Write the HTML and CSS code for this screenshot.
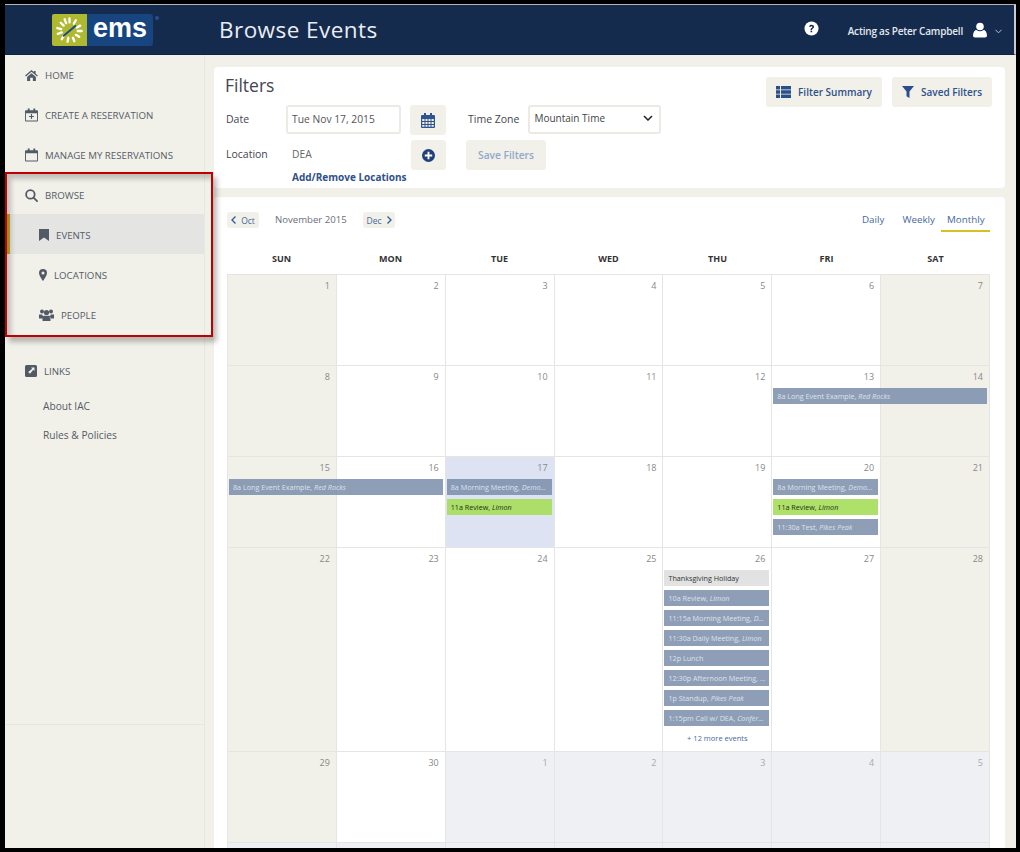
FILE: index.html
```html
<!DOCTYPE html>
<html lang="en">
<head>
  <meta charset="UTF-8">
  <title>Browse Events</title>
  <link rel="stylesheet" href="styles.css">
</head>
<body>
  <div class="window">
    <header class="topbar">
      <div class="logo">
        <div class="logo-mark">
          <svg viewBox="0 0 36 32" width="35" height="32" fill="none" stroke="#fff" stroke-width="2.4" stroke-linecap="round">
            <path d="M18 4v4M24.5 6l-2 3.5M29 11.500l-3.500 2M30.500 17h-4M28 23l-3.500-2M23 27.500l-1.500-3.500M16 28l.8-4M10 25.500l2-3.500M6 20l4-1.500M5.500 14l4 1M9 8.500l3 3M13 5l1.500 4"/>
            <path d="M12 22L24 12" stroke="#1b4a8a" stroke-width="2"/>
          </svg>
        </div>
        <div class="logo-name">ems</div>
        <span class="logo-dot"></span>
      </div>
      <h1 class="page-title">Browse Events</h1>
      <div class="topbar-right">
        <svg class="help-icon" viewBox="0 0 16 16" width="15" height="15">
          <circle cx="8" cy="8" r="7.500" fill="#fff"/>
          <path d="M5.400 6.200C5.600 4.700 6.700 4 8.100 4c1.500 0 2.600.9 2.600 2.200 0 1.100-.6 1.600-1.400 2.100-.6.4-.7.600-.7 1.200H7c0-1.100.3-1.600 1.100-2.100.6-.4.9-.7.9-1.100 0-.5-.4-.8-1-.8s-1 .3-1.100 1z" fill="#152b4d"/>
          <rect x="7" y="10.300" width="1.700" height="1.700" fill="#152b4d"/>
        </svg>
        <span class="acting">Acting as Peter Campbell</span>
        <svg viewBox="0 0 14 16" width="14" height="16" fill="#fff">
          <circle cx="7" cy="4.500" r="3.800"/>
          <path d="M0 13.500C0 10 1.800 8 3.500 8c1 .8 2.200 1.200 3.500 1.200S9.500 8.800 10.500 8C12.200 8 14 10 14 13.500c0 1.200-.8 2-2 2H2c-1.200 0-2-.8-2-2z"/>
        </svg>
        <svg class="caret" viewBox="0 0 8 5" width="7" height="5" fill="none" stroke="#c9d0da" stroke-width="1">
          <path d="M.5 .5L4 4l3.500-3.500"/>
        </svg>
      </div>
    </header>

    <div class="content">
      <aside class="sidebar">
        <nav class="nav">
          <a class="nav-item">
            <svg viewBox="0 0 14 12" width="13" height="11"><path d="M7 0L0 6l1 1 6-5 6 5 1-1-2.500-2V1h-2v1.300zM2.200 7.500V12h3.300V8.500h3V12h3.300V7.500L7 3.500z"/></svg>
            HOME
          </a>
          <a class="nav-item">
            <svg viewBox="0 0 14 14" width="13" height="14"><path fill-rule="evenodd" d="M1 2h2V0h2v2h4V0h2v2h2a1 1 0 0 1 1 1v10a1 1 0 0 1-1 1H1a1 1 0 0 1-1-1V3a1 1 0 0 1 1-1zm0 3v8h12V5zM6.400 6h1.200v2h2v1.200h-2v2H6.400v-2h-2V8h2z"/></svg>
            CREATE A RESERVATION
          </a>
          <a class="nav-item">
            <svg viewBox="0 0 14 14" width="13" height="14"><path fill-rule="evenodd" d="M1 2h2V0h2v2h4V0h2v2h2a1 1 0 0 1 1 1v10a1 1 0 0 1-1 1H1a1 1 0 0 1-1-1V3a1 1 0 0 1 1-1zm0 3v8h12V5z"/></svg>
            MANAGE MY RESERVATIONS
          </a>
          <a class="nav-item">
            <svg class="search-icon" viewBox="0 0 14 14" width="13" height="13"><circle cx="5.800" cy="5.800" r="4.600"/><path d="M9.200 9.200L13 13"/></svg>
            BROWSE
          </a>
          <a class="nav-item sub active">
            <svg viewBox="0 0 10 12" width="10" height="12"><path d="M0 0h10v12L5 8.500 0 12z"/></svg>
            EVENTS
          </a>
          <a class="nav-item sub">
            <svg viewBox="0 0 8 12" width="8" height="12"><path fill-rule="evenodd" d="M4 0a4 4 0 0 1 4 4c0 2-2.500 6-4 8-1.500-2-4-6-4-8a4 4 0 0 1 4-4zm0 2.500a1.500 1.500 0 1 0 0 3 1.500 1.500 0 0 0 0-3z"/></svg>
            LOCATIONS
          </a>
          <a class="nav-item sub">
            <svg viewBox="0 0 15 12" width="15" height="12"><circle cx="3" cy="2.500" r="2"/><circle cx="12" cy="2.500" r="2"/><circle cx="7.500" cy="3.500" r="2.600"/><path d="M0 5.500h3.200l1 2.500v1.500H0zM15 5.500h-3.200l-1 2.500v1.500H15zM4.500 6.800h6l1 2v2.700a.5.5 0 0 1-.5.500H4a.5.500 0 0 1-.5-.5V8.800z"/></svg>
            PEOPLE
          </a>
        </nav>
        <div class="links">
          <div class="nav-item links-title">
            <svg viewBox="0 0 12 12" width="12" height="12"><path fill-rule="evenodd" d="M1.500 0h9A1.500 1.500 0 0 1 12 1.500v9a1.500 1.500 0 0 1-1.500 1.500h-9A1.500 1.500 0 0 1 0 10.500v-9A1.500 1.500 0 0 1 1.500 0zM6 2.500l1.200 1.200-4 3.300 1.800 1.800 3.300-4L9.500 6V2.500z"/></svg>
            LINKS
          </div>
          <a class="link">About IAC</a>
          <a class="link">Rules &amp; Policies</a>
        </div>
        <div class="sidebar-footer"></div>
      </aside>

      <main class="main">
        <section class="card filters">
          <div class="filters-left">
            <h2 class="filters-title">Filters</h2>
            <div class="filter-row">
              <span class="filter-label">Date</span>
              <div class="input">Tue Nov 17, 2015</div>
              <button class="icon-btn">
                <svg viewBox="0 0 14 15" width="14" height="15" fill="#2e5590"><path fill-rule="evenodd" d="M1 2h2V0h2v2h4V0h2v2h2a1 1 0 0 1 1 1v11a1 1 0 0 1-1 1H1a1 1 0 0 1-1-1V3a1 1 0 0 1 1-1zm.200 4v2h2.300V6zm3.300 0v2h2V6zm3 0v2h2V6zm3 0v2h2.300V6zm-9.300 3v2h2.300V9zm3.300 0v2h2V9zm3 0v2h2V9zm3 0v2h2.300V9zm-9.300 3v1.800h2.300V12zm3.300 0v1.800h2V12zm3 0v1.800h2V12zm3 0v1.800h2.300V12z"/></svg>
              </button>
              <span class="filter-label tz">Time Zone</span>
              <div class="select">
                Mountain Time
                <svg viewBox="0 0 10 6" width="10" height="6" fill="none" stroke="#222" stroke-width="1.500"><path d="M1 1l4 4 4-4"/></svg>
              </div>
            </div>
            <div class="filter-row">
              <span class="filter-label">Location</span>
              <span class="location-value">DEA</span>
              <button class="icon-btn add-btn">
                <svg viewBox="0 0 14 14" width="13" height="13"><circle cx="7" cy="7" r="7" fill="#1f427c"/><path d="M6 3h2v3h3v2H8v3H6V8H3V6h3z" fill="#fff"/></svg>
              </button>
              <button class="save-btn">Save Filters</button>
            </div>
            <a class="add-link">Add/Remove Locations</a>
          </div>
          <div class="filters-actions">
            <button class="action-btn">
              <svg viewBox="0 0 15 12" width="15" height="12" fill="#2a4f8a"><path d="M0 0h4v3.400H0zM5 0h10v3.400H5zM0 4.300h4v3.400H0zM5 4.300h10v3.400H5zM0 8.600h4V12H0zM5 8.600h10V12H5z"/></svg>
              Filter Summary
            </button>
            <button class="action-btn saved">
              <svg viewBox="0 0 12 12" width="12" height="12" fill="#2a4f8a"><path d="M0 0h12L7.500 5.500V12l-3-1.800V5.500z"/></svg>
              Saved Filters
            </button>
          </div>
        </section>

        <section class="card calendar">
          <div class="cal-toolbar">
            <div class="cal-nav">
              <a class="month-btn"><svg viewBox="0 0 5 8" width="5" height="8" fill="none" stroke="#2f5a96" stroke-width="1.300"><path d="M4.500 .5L1 4l3.500 3.500"/></svg> Oct</a>
              <span class="cal-month">November 2015</span>
              <a class="month-btn">Dec <svg viewBox="0 0 5 8" width="5" height="8" fill="none" stroke="#2f5a96" stroke-width="1.300"><path d="M.5 .5L4 4 .5 7.500"/></svg></a>
            </div>
            <div class="cal-tabs">
              <a class="cal-tab">Daily</a>
              <a class="cal-tab">Weekly</a>
              <a class="cal-tab current">Monthly</a>
            </div>
          </div>

          <div class="weekdays">
            <span>SUN</span><span>MON</span><span>TUE</span><span>WED</span><span>THU</span><span>FRI</span><span>SAT</span>
          </div>

          <div class="month">
            <div class="day weekend"><div class="num">1</div></div>
            <div class="day"><div class="num">2</div></div>
            <div class="day"><div class="num">3</div></div>
            <div class="day"><div class="num">4</div></div>
            <div class="day"><div class="num">5</div></div>
            <div class="day"><div class="num">6</div></div>
            <div class="day weekend"><div class="num">7</div></div>

            <div class="day weekend"><div class="num">8</div></div>
            <div class="day"><div class="num">9</div></div>
            <div class="day"><div class="num">10</div></div>
            <div class="day"><div class="num">11</div></div>
            <div class="day"><div class="num">12</div></div>
            <div class="day"><div class="num">13</div><div class="event wide">8a Long Event Example, <i>Red Rocks</i></div></div>
            <div class="day weekend"><div class="num">14</div></div>

            <div class="day weekend"><div class="num">15</div><div class="event wide">8a Long Event Example, <i>Red Rocks</i></div></div>
            <div class="day"><div class="num">16</div></div>
            <div class="day today">
              <div class="num">17</div>
              <div class="event">8a Morning Meeting, <i>Demo...</i></div>
              <div class="event green">11a Review, <i>Limon</i></div>
            </div>
            <div class="day"><div class="num">18</div></div>
            <div class="day"><div class="num">19</div></div>
            <div class="day">
              <div class="num">20</div>
              <div class="event">8a Morning Meeting, <i>Demo...</i></div>
              <div class="event green">11a Review, <i>Limon</i></div>
              <div class="event">11:30a Test, <i>Pikes Peak</i></div>
            </div>
            <div class="day weekend"><div class="num">21</div></div>

            <div class="day tall weekend"><div class="num">22</div></div>
            <div class="day tall"><div class="num">23</div></div>
            <div class="day tall"><div class="num">24</div></div>
            <div class="day tall"><div class="num">25</div></div>
            <div class="day tall">
              <div class="num">26</div>
              <div class="event holiday">Thanksgiving Holiday</div>
              <div class="event">10a Review, <i>Limon</i></div>
              <div class="event">11:15a Morning Meeting, <i>D...</i></div>
              <div class="event">11:30a Daily Meeting, <i>Limon</i></div>
              <div class="event">12p Lunch</div>
              <div class="event">12:30p Afternoon Meeting, ...</div>
              <div class="event">1p Standup, <i>Pikes Peak</i></div>
              <div class="event">1:15pm Call w/ DEA, <i>Confer...</i></div>
              <a class="more">+ 12 more events</a>
            </div>
            <div class="day tall"><div class="num">27</div></div>
            <div class="day tall weekend"><div class="num">28</div></div>

            <div class="day weekend"><div class="num">29</div></div>
            <div class="day"><div class="num">30</div></div>
            <div class="day other"><div class="num">1</div></div>
            <div class="day other"><div class="num">2</div></div>
            <div class="day other"><div class="num">3</div></div>
            <div class="day other"><div class="num">4</div></div>
            <div class="day other"><div class="num">5</div></div>

            <div class="day other"></div>
            <div class="day other"></div>
            <div class="day other"></div>
            <div class="day other"></div>
            <div class="day other"></div>
            <div class="day other"></div>
            <div class="day other"></div>
          </div>
        </section>
      </main>
    </div>

    <div class="callout"></div>
  </div>
</body>
</html>
```

FILE: styles.css
```css
html, body {
  margin: 0;
  height: 100%;
  overflow: hidden;
  background: #000;
}
body {
  font-family: "Open Sans", "Noto Sans", Arial, sans-serif;
  color: #444;
}
button {
  font-family: inherit;
  border: none;
  cursor: pointer;
}

.window {
  position: relative;
  margin: 4px 4px 0 5px;
  width: 1011px;
  height: 844px;
  display: flex;
  flex-direction: column;
  overflow: hidden;
  background: #f1f0e9;
  border-top: 1px solid #b5b5b5;
  box-sizing: border-box;
}

/* top bar */
.topbar {
  flex: none;
  height: 49px;
  display: flex;
  align-items: center;
  background: #152b4d;
  border-right: 2px solid #c9ccd2;
  border-bottom: 1px solid #10233f;
  box-sizing: content-box;
}
.logo {
  display: flex;
  margin-left: 47px;
  position: relative;
  height: 32px;
}
.logo-mark {
  width: 35px;
  background: #aeb92f;
  border-radius: 2px 0 0 2px;
}
.logo-name {
  width: 66px;
  background: #17457f;
  border-radius: 0 3px 3px 0;
  color: #fff;
  font-family: "Liberation Sans", Arial, sans-serif;
  font-size: 27px;
  font-weight: bold;
  line-height: 29px;
  text-align: center;
}
.logo-dot {
  position: absolute;
  right: -6px;
  top: 2px;
  width: 4px;
  height: 4px;
  border-radius: 50%;
  background: #2a4f82;
}
.page-title {
  margin: 0 0 0 66px;
  font-size: 22.500px;
  font-weight: 400;
  letter-spacing: .45px;
  color: #e9edf2;
}
.topbar-right {
  margin-left: auto;
  display: flex;
  align-items: center;
  padding-right: 12px;
  color: #e4e8ee;
}
.help-icon {
  margin-right: 29px;
  margin-left: -1px;
  margin-top: -3px;
}
.acting {
  font-size: 10px;
  font-weight: 600;
  margin-right: 10px;
  letter-spacing: -.2px;
  padding-top: 2px;
}
.caret {
  margin-left: 8px;
  margin-top: 3px;
}

/* sidebar */
.content {
  flex: 1;
  display: flex;
  min-height: 0;
}
.sidebar {
  flex: none;
  width: 200px;
  display: flex;
  flex-direction: column;
  border-right: 1px solid #e7e6df;
  box-sizing: border-box;
}
.nav-item {
  height: 40px;
  display: flex;
  align-items: center;
  gap: 7px;
  padding-left: 20px;
  font-size: 9.700px;
  font-weight: 500;
  color: #555c67;
  box-sizing: border-box;
}
.nav-item svg {
  fill: #525a66;
  flex: none;
}
.nav-item .search-icon {
  fill: none;
  stroke: #525a66;
  stroke-width: 1.900;
  stroke-linecap: round;
}
.nav-item.sub {
  padding-left: 34px;
}
.nav-item.active {
  background: #e4e4e3;
  border-left: 4px solid #c9a81c;
  margin: -1px 0 1px 1px;
  padding: 2px 0 0 29px;
}
.links {
  flex: 1;
  padding-top: 21px;
}
.links-title {
  height: 30px;
  margin-bottom: 6px;
}
.link {
  display: block;
  height: 29px;
  line-height: 29px;
  padding-left: 38px;
  font-size: 10.200px;
  font-weight: 500;
  color: #555c67;
}
.sidebar-footer {
  flex: none;
  height: 123px;
  border-top: 1px solid #e7e6df;
}

/* main */
.main {
  flex: 1;
  min-width: 0;
  padding: 12px 11px 0 9px;
  display: flex;
  flex-direction: column;
  gap: 9px;
}
.card {
  background: #fff;
  border-radius: 4px;
}
.filters {
  flex: none;
  height: 121px;
  display: flex;
  justify-content: space-between;
}
.filters-left {
  padding-left: 11px;
}
.filters-title {
  margin: 0;
  height: 38px;
  font-size: 17.500px;
  font-weight: 400;
  line-height: 36px;
  color: #3f4650;
}
.filter-row {
  display: flex;
  align-items: center;
  height: 30px;
  margin-bottom: 5px;
  font-size: 10.300px;
}
.filter-label {
  width: 61px;
  flex: none;
  padding: 0 0 3px 1px;
  box-sizing: border-box;
  color: #3f4650;
  font-size: 10.500px;
  font-weight: 500;
}
.filter-label.tz {
  width: auto;
  margin-left: 22px;
  margin-right: 9px;
  padding-left: 0;
}
.input {
  width: 115px;
  height: 29px;
  line-height: 24px;
  padding-left: 4px;
  margin-bottom: 1px;
  border: 2px solid #eceae3;
  border-radius: 3px;
  box-sizing: border-box;
  color: #555;
}
.icon-btn {
  width: 36px;
  height: 30px;
  margin-left: 9px;
  padding: 0;
  display: flex;
  align-items: center;
  justify-content: center;
  background: #f1f0e9;
  border-radius: 3px;
}
.select {
  width: 133px;
  height: 29px;
  padding: 0 6px 3px 4px;
  margin-bottom: 2px;
  display: flex;
  align-items: center;
  justify-content: space-between;
  border: 2px solid #eceae3;
  border-radius: 3px;
  box-sizing: border-box;
  font-size: 10px;
  color: #444;
}
.location-value {
  width: 125px;
  padding: 0 0 2px 6px;
  box-sizing: border-box;
  color: #666;
}
.add-btn {
  width: 35px;
  margin-left: 0;
}
.save-btn {
  width: 80px;
  height: 30px;
  margin-left: 20px;
  padding: 0;
  background: #f1f0e9;
  border-radius: 3px;
  font-size: 10.200px;
  font-weight: 600;
  color: #90a8cc;
}
.add-link {
  display: block;
  margin: -5px 0 0 67px;
  font-size: 10px;
  font-weight: 700;
  color: #2f5189;
}
.filters-actions {
  display: flex;
  gap: 10px;
  padding: 10px 13px 0 0;
  align-items: flex-start;
}
.action-btn {
  width: 116px;
  height: 30px;
  display: flex;
  align-items: center;
  justify-content: center;
  gap: 7px;
  background: #f1f0e9;
  border-radius: 3px;
  font-size: 10px;
  font-weight: 600;
  color: #2f5189;
}
.action-btn.saved {
  width: 100px;
}

/* calendar */
.calendar {
  flex: 1;
  padding: 0 15px 0 13px;
}
.cal-toolbar {
  height: 35px;
  display: flex;
  justify-content: space-between;
  padding-top: 15px;
}
.cal-nav {
  display: flex;
  align-items: flex-start;
}
.month-btn {
  width: 32px;
  height: 16px;
  display: flex;
  align-items: center;
  justify-content: center;
  gap: 5px;
  background: #f1f0e9;
  border-radius: 3px;
  font-size: 8.500px;
  color: #46689c;
}
.cal-month {
  width: 104px;
  padding-left: 16px;
  box-sizing: border-box;
  line-height: 16px;
  font-size: 9.600px;
  color: #6a6f78;
}
.cal-tabs {
  display: flex;
  align-items: flex-start;
}
.cal-tab {
  padding: 0 5px 3px;
  margin-left: 8px;
  line-height: 15px;
  font-size: 9.800px;
  color: #46689c;
}
.cal-tab.current {
  margin-left: 1px;
  padding: 0 5px 3px 6px;
  width: 49px;
  box-sizing: border-box;
  border-bottom: 2px solid #d2c31f;
}
.weekdays {
  display: grid;
  grid-template-columns: repeat(7, 1fr);
  width: 763px;
  height: 27px;
  text-align: center;
  font-size: 9px;
  font-weight: 700;
  line-height: 24px;
  color: #333;
}
.month {
  display: grid;
  grid-template-columns: repeat(7, 1fr);
  width: 763px;
  box-sizing: border-box;
  border-top: 1px solid #e5e5e3;
  border-left: 1px solid #e5e5e3;
}
.day {
  height: 91px;
  border-right: 1px solid #e5e5e3;
  border-bottom: 1px solid #e5e5e3;
  box-sizing: border-box;
  min-width: 0;
}
.day.tall {
  height: 204px;
}
.day.weekend {
  background: #f1f0e9;
}
.day.today {
  background: #dde3f3;
}
.day.other {
  background: #eef0f3;
}
.num {
  height: 18px;
  padding: 4px 6px 0 0;
  margin-bottom: 4px;
  box-sizing: border-box;
  text-align: right;
  font-size: 9px;
  line-height: 14px;
  color: #888;
}
.day.other .num {
  color: #aaa;
}
.event {
  position: relative;
  z-index: 1;
  height: 16px;
  margin: 0 2px 4px 1px;
  padding-left: 4px;
  line-height: 16px;
  font-size: 7.200px;
  white-space: nowrap;
  overflow: hidden;
  color: #dde2ea;
  background: rgba(122, 141, 170, .85);
}
.event.wide {
  width: 209.500px;
}
.event.green {
  color: #243012;
  background: rgba(165, 222, 90, .9);
}
.event.holiday {
  color: #333;
  background: #e2e2e2;
}
.more {
  display: block;
  text-align: center;
  font-size: 7.500px;
  line-height: 16px;
  color: #46689c;
}

/* red annotation box drawn over the sidebar */
.callout {
  position: absolute;
  left: 0;
  top: 167px;
  width: 208px;
  height: 165px;
  box-sizing: border-box;
  border: 2px solid #c00000;
  box-shadow: 4px 5px 5px rgba(0, 0, 0, .25), inset 4px 5px 5px rgba(0, 0, 0, .2);
  pointer-events: none;
}
```
